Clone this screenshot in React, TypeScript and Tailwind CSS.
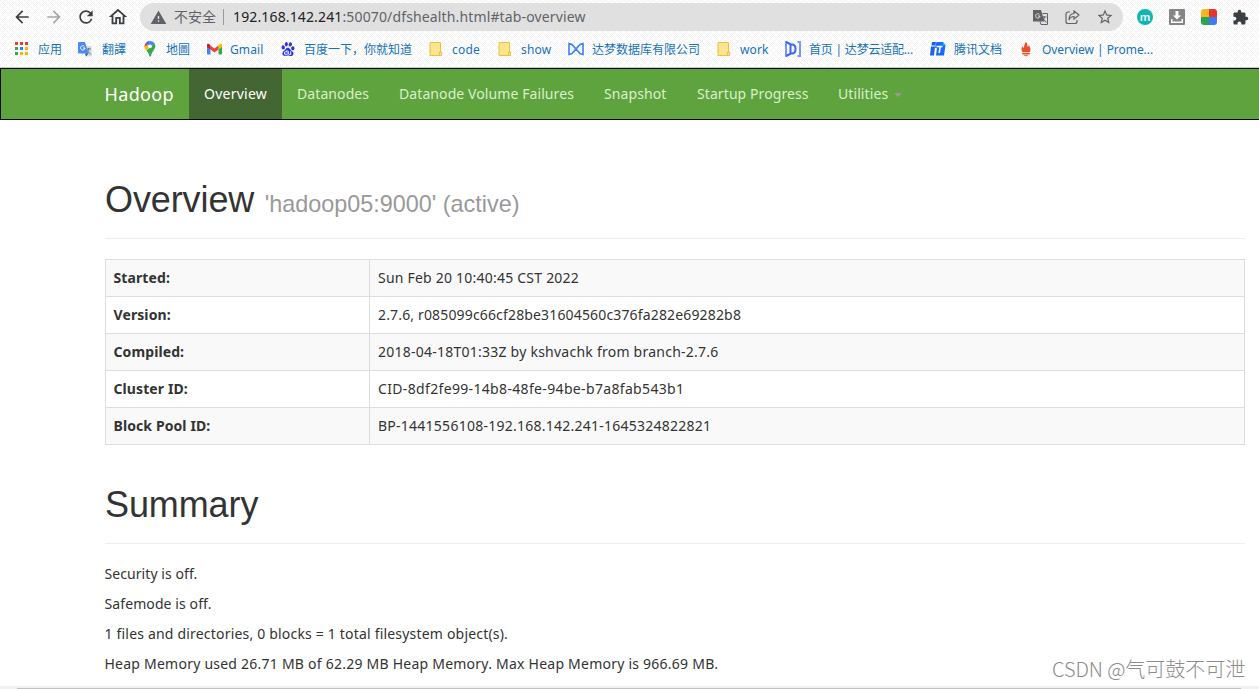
import type { ReactNode } from "react";
import { MdArrowBack, MdArrowForward, MdRefresh, MdOutlineHome, MdWarning, MdStarOutline, MdExtension } from "react-icons/md";
import { SiBaidu } from "react-icons/si";

const folder = (
  <svg width="14" height="16" viewBox="0 0 14 16"><path d="M1 1.500h10.500v9.500h1v3.500H1z" fill="#ffe48f" stroke="#e8c33f" /><path d="M10.500 14v-3h2" fill="none" stroke="#e8c33f" /></svg>
);
const apps = (
  <svg width="14" height="14" viewBox="0 0 14 14" className="ml-px">
    {["#f03a2e", "#f03a2e", "#f03a2e", "#34a853", "#1a88ff", "#fbb404", "#34a853", "#fbb404", "#fbb404"].map((c, i) => (
      <rect key={i} x={(i % 3) * 5} y={Math.floor(i / 3) * 5} width="3" height="3" fill={c} />
    ))}
  </svg>
);
const translate = (
  <svg width="14" height="15" viewBox="0 0 14 15"><path d="M6 4h7.500v10.500H8z" fill="#d5d8dc" /><path d="M8 7h5M10.500 6v1c0 2-1 3-2 4M9 8.500l4 4" stroke="#68788f" fill="none" /><path d="M1 0h6l3.500 11.500H1a1 1 0 0 1-1-1V1a1 1 0 0 1 1-1z" fill="#4a8af4" /><path d="M6.300 4.300A2.200 2.200 0 1 0 7 6H5" stroke="#fff" fill="none" /><path d="M7 11.500h3.500L8 14.500z" fill="#2559b8" /></svg>
);
const pin = (
  <svg width="12" height="16" viewBox="0 0 12 16" className="ml-px"><path d="M6 0a5.500 5.500 0 0 0-4.300 2L4 4.500z" fill="#1a73e8" /><path d="M1.700 2C.7 3.200.3 4.500.6 6L4 4z" fill="#ea4335" /><path d="M6 0c2 0 3.700.9 4.700 2.500L7 6 4 4z" fill="#4285f4" /><path d="M10.700 2.500c2.500 5-3.200 7-3.700 13H5.500C5.200 13 4 11.500 2.500 9.500z" fill="#34a853" /><path d="M.6 6c.1 1.500.9 2.500 1.900 3.500L7 5 4 4z" fill="#fbbc04" /><circle cx="6" cy="5.300" r="1.900" fill="#fff" /></svg>
);
const gmail = (
  <svg width="15" height="12" viewBox="0 0 15 12" className="ml-px"><path d="M0 2v8.500c0 .6.500 1 1 1h2.500V4z" fill="#4285f4" /><path d="M11.500 4v7.500H14c.6 0 1-.4 1-1V2z" fill="#34a853" /><path d="M0 1.800V4l3.500 2.500V2.500L2.200 1C1.200.2 0 .8 0 1.800z" fill="#c5221f" /><path d="M3.500 2.500v4l4 3 4-3v-4l-4 3z" fill="#ea4335" /><path d="M11.500 2.500v4L15 4V1.800C15 .8 13.800.2 12.800 1z" fill="#fbbc04" /></svg>
);
const dm = (
  <svg width="17" height="14" viewBox="0 0 17 14" fill="none" stroke="#3b82f6" strokeWidth="1.600" className="ml-px"><path d="M4 2.500L1 1.500v11l3-1L12 2.500l3-1v11l-3-1z" /></svg>
);
const dmCloud = (
  <svg width="17" height="16" viewBox="0 0 17 16" fill="none" className="ml-px"><path d="M1 0v16" stroke="#7b97f9" strokeWidth="2" /><path d="M1 1l5 2.500h1c2.500 0 3.500 1.500 3.500 4.500s-1 4.500-3.500 4.500H6L1 15M5.500 3.500v9" stroke="#3c67f5" strokeWidth="2" /><path d="M12.500 1H15v14h-2.500" stroke="#7b97f9" strokeWidth="2" /></svg>
);
const docs = (
  <svg width="16" height="14" viewBox="0 0 16 14" className="ml-px"><path d="M2 0h4L5.500 3.500h-4zM1 4.500h4L4 13.500H0z" fill="#1e62ec" /><path d="M6.500 0H13l2.500 3L14 13.500H6L7 6H5z" fill="#1769ff" /><path d="M6.500 4.500h6M10.200 4.500L9.200 11" stroke="#fff" strokeWidth="1.600" /><path d="M12.500 0L16 3.500h-3z" fill="#12c8dc" /></svg>
);
const flame = (
  <svg width="10" height="15" viewBox="0 0 10 15" fill="#e6522c" className="ml-[2px]"><path d="M5 0c2 2 1 4 2 5 .5-.5.6-1 .5-2C10 6 10 9 8.500 10.200h-7C0 8 .2 6 1.500 4c.2 1 .5 1.500 1 2C3.500 4 3 2 5 0zM1.200 11h7.600v1.400H1.200zM2.800 13.200h4.400C6.500 14.600 3.500 14.600 2.800 13.200z" /></svg>
);

type Bookmark = { icon: ReactNode; label: string; slot: string; text: string };
const bookmarks: Bookmark[] = [
  { icon: apps, label: "应用", slot: "w-[64px]", text: "" },
  { icon: translate, label: "翻譯", slot: "w-[65px]", text: "" },
  { icon: pin, label: "地圖", slot: "w-[63px]", text: "-ml-px" },
  { icon: gmail, label: "Gmail", slot: "w-[74px]", text: "tracking-[0.1px]" },
  { icon: <SiBaidu size={14} color="#2932e1" className="ml-px" />, label: "百度一下，你就知道", slot: "w-[149px]", text: "" },
  { icon: folder, label: "code", slot: "w-[69px]", text: "-ml-px tracking-[0.2px]" },
  { icon: folder, label: "show", slot: "w-[69px]", text: "-ml-px tracking-[0.15px]" },
  { icon: dm, label: "达梦数据库有限公司", slot: "w-[150px]", text: "pl-px" },
  { icon: folder, label: "work", slot: "w-[67px]", text: "-ml-px tracking-[0.15px]" },
  { icon: dmCloud, label: "首页 | 达梦云适配...", slot: "w-[145px]", text: "pl-px tracking-[-0.2px]" },
  { icon: docs, label: "腾讯文档", slot: "w-[90px]", text: "pl-px" },
  { icon: flame, label: "Overview | Prome...", slot: "w-[140px]", text: "-ml-px tracking-[-0.05px]" },
];

const rows = [
  ["Started:", "Sun Feb 20 10:40:45 CST 2022", "tracking-[0.22px]"],
  ["Version:", "2.7.6, r085099c66cf28be31604560c376fa282e69282b8", "tracking-[0.155px]"],
  ["Compiled:", "2018-04-18T01:33Z by kshvachk from branch-2.7.6", "tracking-[0.24px]"],
  ["Cluster ID:", "CID-8df2fe99-14b8-48fe-94be-b7a8fab543b1", "tracking-[0.34px]"],
  ["Block Pool ID:", "BP-1441556108-192.168.142.241-1645324822821", "tracking-[0.25px]"],
];

const nav = [
  ["Datanodes", "w-[102px]"],
  ["Datanode Volume Failures", "w-[205px]"],
  ["Snapshot", "w-[93px]"],
  ["Startup Progress", "w-[141px]"],
  ["Utilities", "w-[71px]"],
];

export default function App() {
  return (
    <div className="relative flex h-[689px] w-[1259px] flex-col overflow-hidden bg-white font-['Noto_Sans','Noto_Sans_CJK_SC',sans-serif] text-[14px] leading-5 text-[#333] whitespace-nowrap">
      <header className="h-[68px] shrink-0 border-b border-[#c9c9c9] bg-[#fefefe] bg-[repeating-linear-gradient(45deg,#f1f1f1_0_1px,transparent_1px_4.243px),repeating-linear-gradient(-45deg,#f1f1f1_0_1px,transparent_1px_4.243px)]">
        <div className="flex h-[34px] items-center">
          <div className="flex w-[140px] items-center gap-[12px] pl-[12px] text-[#3c4043]">
            <MdArrowBack size={20} /><MdArrowForward size={20} color="#a3a5a8" /><MdRefresh size={20} /><MdOutlineHome size={22} className="-ml-px" />
          </div>
          <div className="flex h-7 w-[983px] items-center rounded-full bg-[#e0e0e0] pl-[10px] text-[#5f6368]">
            <MdWarning size={17} />
            <span className="ml-[7px] w-[43px]">不安全</span>
            <span className="mx-[6px] h-4 w-px bg-[#9b9b9b]" />
            <span className="ml-[3px] tracking-[0.14px]"><span className="text-[#202124]">192.168.142.241</span>:50070/dfshealth.html#tab-overview</span>
            <span className="ml-auto flex items-center gap-[17px] pr-[9px]">
              <svg width="15" height="15" viewBox="0 0 15 15"><path d="M0 0h8l3.500 11.500H0z" fill="#5f6368" /><path d="M6.300 4.300A2.200 2.200 0 1 0 7 6H5" stroke="#e0e0e0" fill="none" /><path d="M9.500 3.500h5v11H8l-1-3M9 7h4.500M11.200 6v1c0 2-1 3-1.700 4M10 8.500l3.500 4" stroke="#5f6368" fill="none" /></svg>
              <svg width="15" height="15" viewBox="0 0 15 15" fill="none" stroke="#5f6368" strokeWidth="1.200"><path d="M5 2H3a2 2 0 0 0-2 2v7.500a2 2 0 0 0 2 2h7a2 2 0 0 0 2-2V10" /><path d="M9 1l5 4-5 4V6.500C6.500 6.500 5 7.500 4 10c0-4 2-6.300 5-6.500z" /></svg>
              <MdStarOutline size={18} className="-ml-px" />
            </span>
          </div>
          <div className="ml-[14px] flex items-center gap-[16px]">
            <span className="flex size-4 items-center justify-center rounded-full bg-[#0fb5b5] pb-px text-[11px] font-semibold text-white">m</span>
            <svg width="16" height="16" viewBox="0 0 16 16"><rect width="16" height="16" rx="1" fill="#858585" /><path d="M6.500 2h3v4.500H12L8 10.500 4 6.500h2.500zM2 10v4h12v-4h-1.500v2.500h-9V10z" fill="#fff" /></svg>
            <span className="grid size-4 grid-cols-2 overflow-hidden rounded-[3px]"><i className="bg-[#fbb324]" /><i className="bg-[#e8352e]" /><i className="bg-[#2ba24c]" /><i className="bg-[#3e7bf0]" /></span>
            <MdExtension size={17} color="#3c4043" className="-ml-px" />
          </div>
        </div>
        <div className="flex h-[30px] items-center pl-[14px] text-[12px] text-[#1673b8]">
          {bookmarks.map((b) => (
            <div key={b.label} className={"flex shrink-0 items-center " + b.slot}>
              <span className="flex w-6 shrink-0 items-center">{b.icon}</span>
              <span className={"pt-[2px] " + b.text}>{b.label}</span>
            </div>
          ))}
        </div>
      </header>
      <nav className="flex h-[52px] shrink-0 border border-r-0 border-[#080808] bg-[#5fa33e] pl-[103px] tracking-[0.09px] text-[#d9f0cc]">
        <span className="w-[85px] pt-[15px] pl-[0.5px] text-[18px] tracking-[0.35px] text-white">Hadoop</span>
        <span className="w-[93px] bg-[#446633] px-[15px] pt-[15px] tracking-[0.25px] text-white">Overview</span>
        {nav.map(([label, width]) => (
          <span key={label} className={"shrink-0 pt-[15px] pl-[15px] " + width}>{label}</span>
        ))}
        <span className="mt-[24px] h-0 w-0 border-x-4 border-t-4 border-x-transparent border-t-[#999]" />
      </nav>
      <main className="flex flex-1 flex-col pl-[105px] pr-[14px]">
        <h1 className="mt-[49px] flex h-[70px] items-baseline border-b border-[#eee] pt-[11px] font-['Liberation_Sans',Arial,sans-serif] text-[36px] leading-10 tracking-[-0.1px]">
          Overview<small className="ml-[10.5px] text-[23.4px] tracking-normal text-[#999]">'hadoop05:9000' (active)</small>
        </h1>
        <table className="mt-5 w-full table-fixed border-collapse">
          <colgroup><col className="w-[264px]" /><col /></colgroup>
          <tbody>
            {rows.map(([k, v, spacing]) => (
              <tr key={k} className="h-[37px] odd:bg-[#f9f9f9]">
                <th className="border border-[#ddd] px-[7.5px] py-0 text-left font-bold tracking-[0.1px]">{k}</th>
                <td className={"border border-[#ddd] px-2 py-0 " + spacing}>{v}</td>
              </tr>
            ))}
          </tbody>
        </table>
        <h1 className="mt-[30px] h-[69px] border-b border-[#eee] pt-[10px] font-['Liberation_Sans',Arial,sans-serif] text-[36px] leading-10 tracking-[-0.1px]">Summary</h1>
        <div className="mt-5 -ml-[0.5px] space-y-[10px]">
          <p className="tracking-[0.07px]">Security is off.</p>
          <p className="tracking-[0.1px]">Safemode is off.</p>
          <p className="tracking-[0.19px]">1 files and directories, 0 blocks = 1 total filesystem object(s).</p>
          <p className="tracking-[0.235px]">Heap Memory used 26.71 MB of 62.29 MB Heap Memory. Max Heap Memory is 966.69 MB.</p>
        </div>
      </main>
      <div className="absolute top-[655px] left-[1052px] font-['Noto_Sans_CJK_SC',sans-serif] text-[20px] leading-7 font-light text-[#8c8c8c]"><span className="tracking-[-0.1px]">CSDN @</span>气可鼓不可泄</div>
      <footer className="flex h-[3px] shrink-0 bg-[#f1f1f1] pt-[2px] pr-[18px] pl-[17px]"><div className="h-px flex-1 bg-[#c1c1c1]" /></footer>
    </div>
  );
}
